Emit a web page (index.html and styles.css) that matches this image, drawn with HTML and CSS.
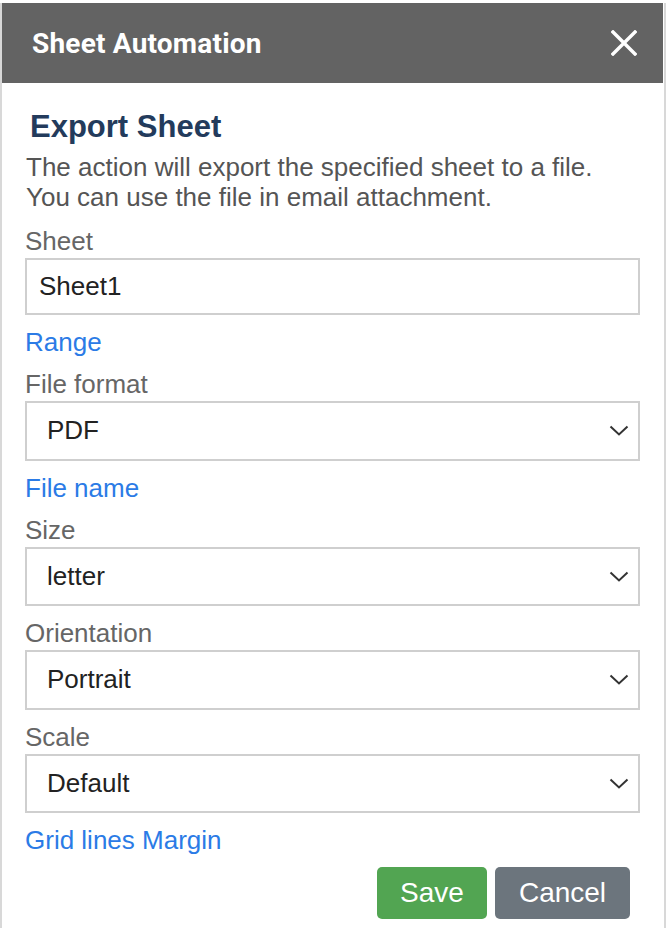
FILE: index.html
```html
<!DOCTYPE html>
<html lang="en">
<head>
<meta charset="utf-8">
<title>Sheet Automation</title>
<link rel="stylesheet" href="styles.css">
</head>
<body>
<div class="panel">
  <div class="header">
    <span class="header-title">Sheet Automation</span>
    <span class="close" aria-label="Close">
      <svg width="26" height="26" viewBox="0 0 26 26"><path d="M2 2 L24 24 M24 2 L2 24" stroke="#fff" stroke-width="3.4" stroke-linecap="square" fill="none"/></svg>
    </span>
  </div>
  <div class="content">
    <h2 class="heading">Export Sheet</h2>
    <p class="desc">The action will export the specified sheet to a file.<br>You can use the file in email attachment.</p>
    <div class="form">
      <div class="field">
        <div class="label">Sheet</div>
        <div class="input">Sheet1</div>
      </div>
      <a class="link">Range</a>
      <div class="field">
        <div class="label">File format</div>
        <div class="select"><span>PDF</span><svg class="chev" width="20" height="11" viewBox="0 0 20 11"><path d="M1.5 1.5 L10 9.5 L18.5 1.5" stroke="#333" stroke-width="2" fill="none"/></svg></div>
      </div>
      <a class="link">File name</a>
      <div class="field">
        <div class="label">Size</div>
        <div class="select"><span>letter</span><svg class="chev" width="20" height="11" viewBox="0 0 20 11"><path d="M1.5 1.5 L10 9.5 L18.5 1.5" stroke="#333" stroke-width="2" fill="none"/></svg></div>
      </div>
      <div class="field">
        <div class="label">Orientation</div>
        <div class="select"><span>Portrait</span><svg class="chev" width="20" height="11" viewBox="0 0 20 11"><path d="M1.5 1.5 L10 9.5 L18.5 1.5" stroke="#333" stroke-width="2" fill="none"/></svg></div>
      </div>
      <div class="field">
        <div class="label">Scale</div>
        <div class="select"><span>Default</span><svg class="chev" width="20" height="11" viewBox="0 0 20 11"><path d="M1.5 1.5 L10 9.5 L18.5 1.5" stroke="#333" stroke-width="2" fill="none"/></svg></div>
      </div>
      <a class="link">Grid lines Margin</a>
      <div class="actions">
        <button class="btn btn-save">Save</button>
        <button class="btn btn-cancel">Cancel</button>
      </div>
    </div>
  </div>
</div>
</body>
</html>
```

FILE: styles.css
```css
* { box-sizing: border-box; }
html, body { margin: 0; padding: 0; background: #fff; }
body {
  padding-top: 3px;
  font-family: "Liberation Sans", Arial, sans-serif;
}
.panel {
  width: 666px;
  min-height: 925px;
  border-left: 2px solid #d8d8d8;
  border-right: 2px solid #d8d8d8;
}
.header {
  height: 80px;
  margin-right: 1px;
  background: #636363;
  display: flex;
  align-items: center;
  justify-content: space-between;
  padding: 0 26px 0 30px;
}
.header-title {
  font-family: Roboto, "Liberation Sans", sans-serif;
  font-weight: 700;
  font-size: 28px;
  color: #fff;
  letter-spacing: 0.2px;
}
.close { display: flex; width: 26px; height: 26px; }
.content {
  padding: 26px 24px 0 23px;
}
.heading {
  margin: 0 0 0 5px;
  font-size: 31px;
  line-height: 36px;
  font-weight: 700;
  color: #233b5c;
}
.desc {
  margin: 7px 0 0 1px;
  font-size: 26px;
  line-height: 30px;
  color: #555;
}
.form {
  margin-top: 14px;
  display: flex;
  flex-direction: column;
  gap: 12px;
}
.field { display: flex; flex-direction: column; gap: 2px; }
.label {
  font-size: 26px;
  line-height: 30px;
  color: #666;
}
.input, .select {
  border: 2px solid #cfcfcf;
  background: #fff;
  font-size: 26px;
  color: #222;
  display: flex;
  align-items: center;
}
.input { height: 57px; padding-left: 12px; }
.select {
  height: 59.5px;
  padding: 0 9px 0 20px;
  justify-content: space-between;
}
.chev { display: block; }
.link {
  font-size: 26px;
  line-height: 30px;
  color: #2b7be6;
  cursor: pointer;
}
.actions {
  margin-top: 0;
  display: flex;
  justify-content: flex-end;
  gap: 8px;
  padding-right: 10px;
}
.btn {
  height: 52px;
  border: none;
  border-radius: 5px;
  font-family: "Liberation Sans", Arial, sans-serif;
  font-size: 28px;
  color: #fff;
  padding: 0 23px;
  cursor: pointer;
}
.btn-save { background: #52a552; width: 110px; }
.btn-cancel { background: #6c757d; width: 135px; }
```
